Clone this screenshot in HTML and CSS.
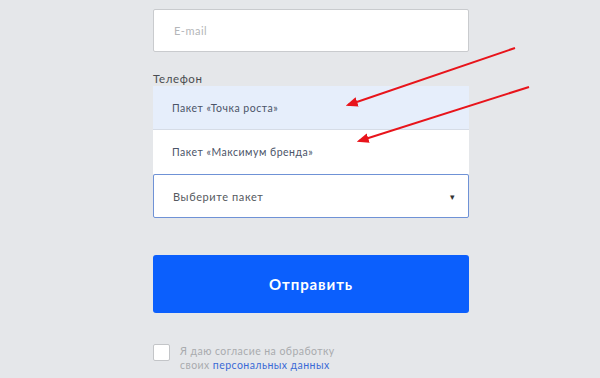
FILE: index.html
```html
<!DOCTYPE html>
<html lang="ru">
  <head>
    <meta charset="UTF-8" />
    <meta name="viewport" content="width=device-width, initial-scale=1.0" />
    <title>Заявка</title>
    <link rel="stylesheet" href="styles.css">
  </head>
  <body>
    <div class="page">
      <form class="form">
        <div class="field">
          <div class="input placeholder">E-mail</div>
        </div>

        <div class="field-phone">
          <div class="label">Телефон</div>
          <div class="dropdown">
            <div class="option option-active">Пакет «Точка роста»</div>
            <div class="option">Пакет «Максимум бренда»</div>
          </div>
          <div class="select">
            <span>Выберите пакет</span>
            <span class="caret">&#9662;</span>
          </div>
        </div>

        <button type="button" class="submit">Отправить</button>

        <label class="agree">
          <span class="checkbox"></span>
          <span class="agree-text">
            Я даю согласие на обработку<br />
            своих <a href="#" class="link">персональных данных</a>
          </span>
        </label>
      </form>

      <!-- annotation arrows -->
      <svg class="arrows" viewBox="0 0 600 378" xmlns="http://www.w3.org/2000/svg">
        <defs>
          <marker id="head" viewBox="0 0 10 10" refX="8" refY="5" markerWidth="6" markerHeight="6" orient="auto">
            <path d="M0 1 L10 5 L0 9 z" fill="#e8141b" />
          </marker>
        </defs>
        <line x1="515" y1="48" x2="348" y2="105" stroke="#e8141b" stroke-width="2" marker-end="url(#head)" />
        <line x1="529" y1="87" x2="359" y2="141" stroke="#e8141b" stroke-width="2" marker-end="url(#head)" />
      </svg>
    </div>
  </body>
</html>
```

FILE: styles.css
```css
* {
  margin: 0;
  padding: 0;
  box-sizing: border-box;
}

html,
body {
  height: 100%;
}

body {
  background-color: #e5e7ea;
  font-family: "Lato", "Open Sans", sans-serif;
  overflow: hidden;
}

.page {
  position: relative;
  width: 600px;
  height: 378px;
}

.form {
  display: flex;
  flex-direction: column;
  width: 316px;
  margin-left: 153px;
  padding-top: 9px;
}

.input {
  display: flex;
  align-items: center;
  height: 43px;
  padding-left: 20px;
  padding-bottom: 1px;
  background-color: #fff;
  border: 1px solid #c9cbce;
  border-radius: 2px;
  font-size: 11px;
  letter-spacing: 0.5px;
}

.placeholder {
  color: #b4b6b9;
}

.field-phone {
  margin-top: 20px;
}

.label {
  font-size: 11.5px;
  color: #4a4d52;
  line-height: 13px;
  margin-bottom: 1px;
  letter-spacing: 0.6px;
}

.dropdown {
  display: flex;
  flex-direction: column;
}

.option {
  display: flex;
  align-items: center;
  height: 44px;
  padding-left: 19px;
  background-color: #fff;
  font-size: 10.5px;
  letter-spacing: 0.5px;
  color: #4b5468;
}

.option-active {
  background-color: #e6eefb;
  border-bottom: 1px solid #d6dce6;
}

.select {
  display: flex;
  align-items: center;
  justify-content: space-between;
  height: 44px;
  padding: 0 12px 0 19px;
  background-color: #fff;
  border: 1px solid #6f92d6;
  border-radius: 2px;
  font-size: 11px;
  letter-spacing: 0.6px;
  color: #555960;
}

.caret {
  font-size: 9px;
  color: #333;
}

.submit {
  margin-top: 37px;
  height: 58px;
  background-color: #0b5ffd;
  border: none;
  border-radius: 3px;
  color: #fff;
  font-family: "Lato", "Open Sans", sans-serif;
  font-size: 15px;
  font-weight: 700;
  letter-spacing: 0.9px;
}

.agree {
  display: flex;
  align-items: flex-start;
  margin-top: 31px;
}

.checkbox {
  width: 17px;
  height: 17px;
  background-color: #fff;
  border: 1px solid #c3c5c8;
  border-radius: 2px;
  flex-shrink: 0;
}

.agree-text {
  margin-left: 10px;
  font-size: 10.5px;
  line-height: 14px;
  color: #a9abae;
  letter-spacing: 0.45px;
}

.link {
  color: #3a6ad6;
  text-decoration: none;
}

.arrows {
  position: absolute;
  top: 0;
  left: 0;
  width: 600px;
  height: 378px;
  pointer-events: none;
}
```
